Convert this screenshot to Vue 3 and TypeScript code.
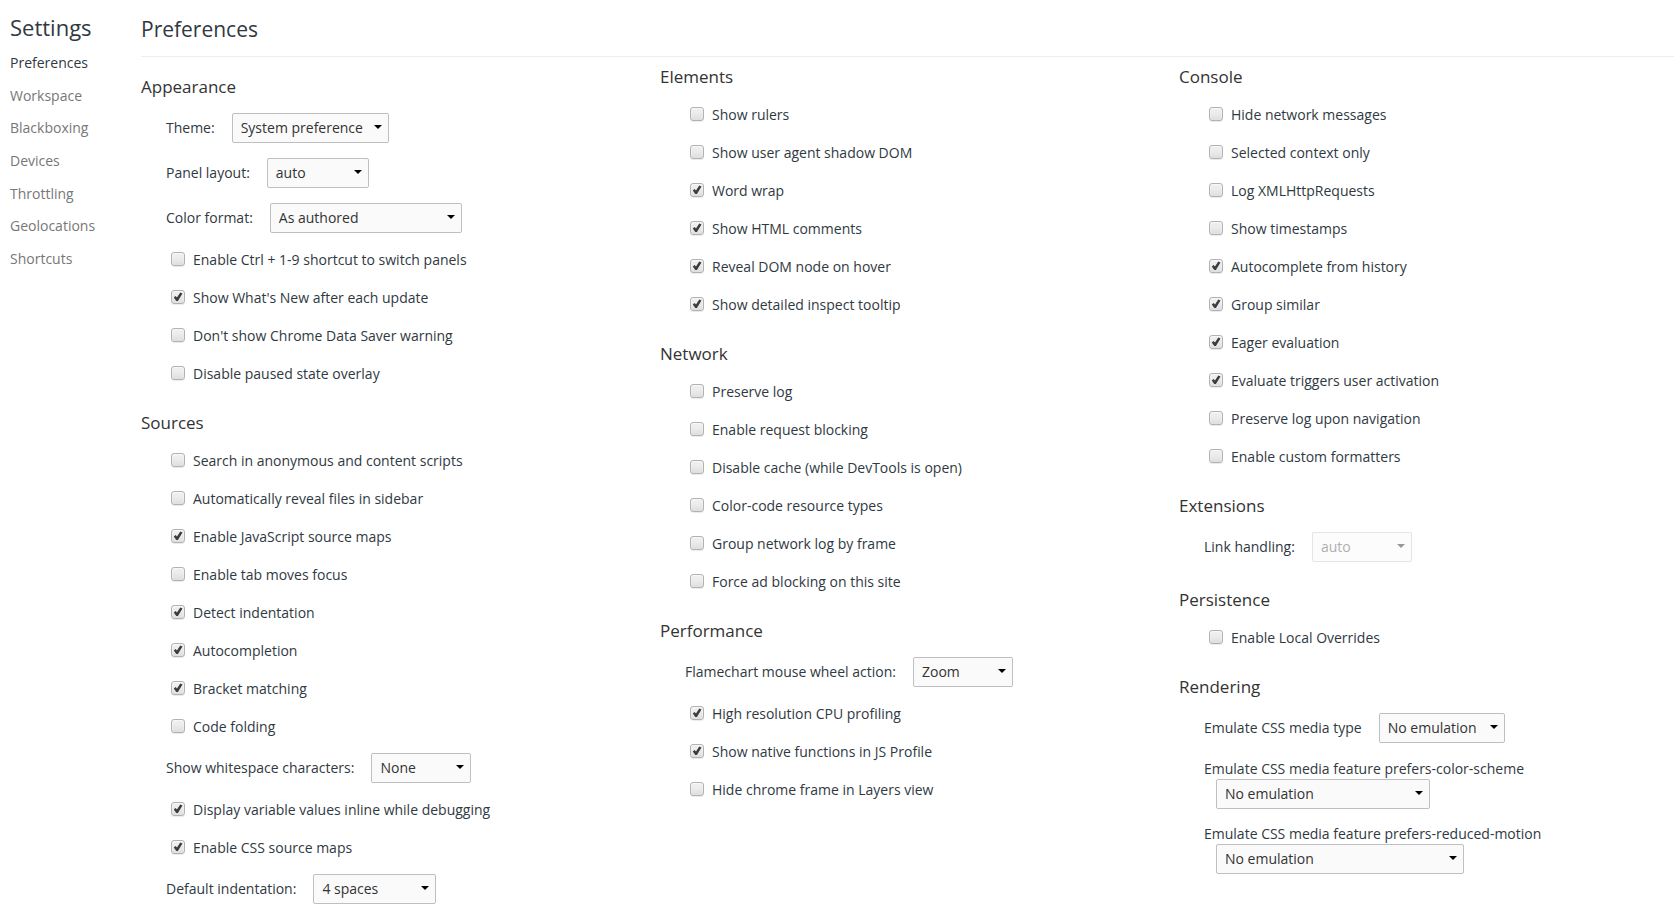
<script setup lang="ts">
import { reactive, ref } from 'vue'

interface CheckSetting {
  kind: 'check'
  id: string
  label: string
  on: boolean
}

interface SelectSetting {
  kind: 'select'
  id: string
  label: string
  value: string
  width: number
  stacked: boolean
  disabled: boolean
}

interface Section {
  title: string
  items: (CheckSetting | SelectSetting)[]
}

let nextId = 0

function check(label: string, on = false): CheckSetting {
  return { kind: 'check', id: `setting-${nextId++}`, label, on }
}

function select(
  label: string,
  value: string,
  width: number,
  options: { stacked?: boolean; disabled?: boolean } = {},
): SelectSetting {
  return {
    kind: 'select',
    id: `setting-${nextId++}`,
    label,
    value,
    width,
    stacked: options.stacked ?? false,
    disabled: options.disabled ?? false,
  }
}

const pages = ['Preferences', 'Workspace', 'Blackboxing', 'Devices', 'Throttling', 'Geolocations', 'Shortcuts']
const current = ref('Preferences')

const columns = reactive<Section[][]>([
  [
    {
      title: 'Appearance',
      items: [
        select('Theme:', 'System preference', 157),
        select('Panel layout:', 'auto', 102),
        select('Color format:', 'As authored', 192),
        check('Enable Ctrl + 1-9 shortcut to switch panels'),
        check("Show What's New after each update", true),
        check("Don't show Chrome Data Saver warning"),
        check('Disable paused state overlay'),
      ],
    },
    {
      title: 'Sources',
      items: [
        check('Search in anonymous and content scripts'),
        check('Automatically reveal files in sidebar'),
        check('Enable JavaScript source maps', true),
        check('Enable tab moves focus'),
        check('Detect indentation', true),
        check('Autocompletion', true),
        check('Bracket matching', true),
        check('Code folding'),
        select('Show whitespace characters:', 'None', 100),
        check('Display variable values inline while debugging', true),
        check('Enable CSS source maps', true),
        select('Default indentation:', '4 spaces', 123),
      ],
    },
  ],
  [
    {
      title: 'Elements',
      items: [
        check('Show rulers'),
        check('Show user agent shadow DOM'),
        check('Word wrap', true),
        check('Show HTML comments', true),
        check('Reveal DOM node on hover', true),
        check('Show detailed inspect tooltip', true),
      ],
    },
    {
      title: 'Network',
      items: [
        check('Preserve log'),
        check('Enable request blocking'),
        check('Disable cache (while DevTools is open)'),
        check('Color-code resource types'),
        check('Group network log by frame'),
        check('Force ad blocking on this site'),
      ],
    },
    {
      title: 'Performance',
      items: [
        select('Flamechart mouse wheel action:', 'Zoom', 100),
        check('High resolution CPU profiling', true),
        check('Show native functions in JS Profile', true),
        check('Hide chrome frame in Layers view'),
      ],
    },
  ],
  [
    {
      title: 'Console',
      items: [
        check('Hide network messages'),
        check('Selected context only'),
        check('Log XMLHttpRequests'),
        check('Show timestamps'),
        check('Autocomplete from history', true),
        check('Group similar', true),
        check('Eager evaluation', true),
        check('Evaluate triggers user activation', true),
        check('Preserve log upon navigation'),
        check('Enable custom formatters'),
      ],
    },
    {
      title: 'Extensions',
      items: [select('Link handling:', 'auto', 100, { disabled: true })],
    },
    {
      title: 'Persistence',
      items: [check('Enable Local Overrides')],
    },
    {
      title: 'Rendering',
      items: [
        select('Emulate CSS media type', 'No emulation', 126),
        select('Emulate CSS media feature prefers-color-scheme', 'No emulation', 214, { stacked: true }),
        select('Emulate CSS media feature prefers-reduced-motion', 'No emulation', 248, { stacked: true }),
      ],
    },
  ],
])
</script>

<template>
  <div class="settings">
    <nav class="sidebar" aria-label="Settings">
      <h1 class="sidebar-title">Settings</h1>
      <ul class="tabs">
        <li v-for="page in pages" :key="page">
          <a
            href="#"
            class="tab"
            :class="{ selected: page === current }"
            :aria-current="page === current ? 'page' : undefined"
            @click.prevent="current = page"
            >{{ page }}</a
          >
        </li>
      </ul>
    </nav>

    <main class="content">
      <header class="content-header">
        <h2>Preferences</h2>
      </header>
      <div class="columns">
        <div v-for="(sections, c) in columns" :key="c" class="column">
          <section v-for="section in sections" :key="section.title" class="section">
            <h3>{{ section.title }}</h3>
            <template v-for="item in section.items" :key="item.id">
              <div v-if="item.kind === 'check'" class="check-row">
                <span class="box">
                  <input :id="item.id" v-model="item.on" type="checkbox" />
                  <svg v-if="item.on" viewBox="0 0 14 14" aria-hidden="true">
                    <path d="M2.8 7.4 4.6 5.9 6 7.4 9.3 2.4 11.5 3.6 6.9 11 5.3 11Z" />
                  </svg>
                </span>
                <label :for="item.id">{{ item.label }}</label>
              </div>
              <div v-else class="select-row" :class="{ stacked: item.stacked }">
                <label :for="item.id">{{ item.label }}</label>
                <span class="picker" :class="{ disabled: item.disabled }" :style="{ width: item.width + 'px' }">
                  <select :id="item.id" v-model="item.value" :disabled="item.disabled">
                    <option>{{ item.value }}</option>
                  </select>
                  <svg viewBox="0 0 8 4" aria-hidden="true"><path d="M0 0H8L4 4Z" /></svg>
                </span>
              </div>
            </template>
          </section>
        </div>
      </div>
    </main>
  </div>
</template>

<style>
body {
  margin: 0;
  background: #fff;
}
</style>

<style scoped>
.settings {
  display: flex;
  height: 100vh;
  overflow: hidden;
  font-family: 'Open Sans', 'Noto Sans', sans-serif;
  font-size: 14px;
  line-height: 20px;
  color: #303942;
}

h1,
h2,
h3 {
  margin: 0;
  font-weight: 400;
}

.sidebar {
  flex: none;
  width: 141px;
  box-sizing: border-box;
  padding: 11px 0 0 10px;
}

.sidebar-title {
  font-size: 22px;
  line-height: 32px;
}

.tabs {
  display: grid;
  grid-auto-rows: 1fr;
  height: 228px;
  margin: 4px 0 0;
  padding: 0;
  list-style: none;
}

.tabs li {
  display: flex;
  align-items: center;
}

.tab {
  color: #777;
  text-decoration: none;
}

.tab.selected {
  color: #303942;
}

.content {
  flex: 1;
  min-width: 0;
  overflow-y: auto;
  scrollbar-width: none;
}

.content-header {
  padding: 13px 0 11px;
  border-bottom: 1px solid #eee;
}

.content-header h2 {
  font-size: 21px;
  line-height: 32px;
}

.columns {
  display: grid;
  grid-template-columns: repeat(3, 1fr);
  gap: 24px;
}

.column {
  padding-top: 1px;
}

.column:first-child {
  padding-top: 11px;
}

.section {
  margin-bottom: 11px;
}

h3 {
  font-size: 17px;
  line-height: 38px;
  color: #333;
}

.check-row {
  display: flex;
  align-items: center;
  gap: 8px;
  height: 38px;
  padding-left: 30px;
}

.box {
  position: relative;
  width: 14px;
  height: 14px;
  margin-bottom: 2px;
}

.box input {
  appearance: none;
  display: block;
  box-sizing: border-box;
  width: 14px;
  height: 14px;
  margin: 0;
  border: 1px solid #b2b2b2;
  border-radius: 3px;
  background: linear-gradient(#ededed 38%, #dedede);
  box-shadow: 0 1px 0 rgba(0, 0, 0, 0.08), inset 0 1px 2px rgba(255, 255, 255, 0.75);
}

.box svg {
  position: absolute;
  inset: 0;
  fill: #3c3c3c;
  pointer-events: none;
}

.select-row {
  display: flex;
  align-items: center;
  gap: 17px;
  box-sizing: border-box;
  height: 45px;
  padding-bottom: 1px;
  padding-left: 25px;
}

.select-row.stacked {
  flex-direction: column;
  align-items: flex-start;
  gap: 0;
  height: auto;
  padding-top: 8px;
  padding-bottom: 7px;
}

.stacked .picker {
  margin-left: 12px;
}

.picker {
  position: relative;
  height: 30px;
}

.picker select {
  appearance: none;
  display: block;
  box-sizing: border-box;
  width: 100%;
  height: 30px;
  margin: 0;
  padding: 0 20px 0 8px;
  border: 1px solid #bfbfbf;
  border-radius: 2px;
  background: #fafafa;
  color: #333;
  font: inherit;
}

.picker svg {
  position: absolute;
  top: 12px;
  right: 7px;
  width: 8px;
  height: 4px;
  fill: #000;
  pointer-events: none;
}

.picker.disabled {
  opacity: 0.4;
}

.picker.disabled select {
  opacity: 1;
}
</style>
